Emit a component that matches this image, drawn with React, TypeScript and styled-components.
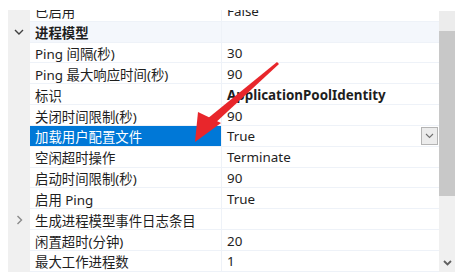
import styled, { createGlobalStyle } from 'styled-components';

const GlobalStyle = createGlobalStyle`
  html, body {
    margin: 0;
    padding: 0;
    background: #ffffff;
  }
`;

const ROW_H = 20.83;

const Frame = styled.div`
  width: 455px;
  height: 272px;
  overflow: hidden;
  background: #ffffff;
  padding-top: 10px;
  padding-left: 8px;
  box-sizing: border-box;
  display: flex;
  font-family: "Noto Sans", "Noto Sans CJK SC", sans-serif;
  font-size: 13.4px;
  color: #1e1e1e;
`;

const Grid = styled.div`
  position: relative;
  flex: 1;
  overflow: hidden;
`;

const Rows = styled.div`
  margin-top: -9px;
  display: flex;
  flex-direction: column;
`;

const Row = styled.div<{ $category?: boolean }>`
  display: grid;
  grid-template-columns: 22px 192px 1fr;
  height: ${ROW_H}px;
  background: ${(p) => (p.$category ? '#f4f7fc' : '#ffffff')};
`;

const Gutter = styled.div`
  background: #f0f0f0;
  display: flex;
  align-items: center;
  justify-content: center;
`;

const Cell = styled.div<{ $selected?: boolean; $bold?: boolean }>`
  display: flex;
  align-items: center;
  padding-left: 5px;
  padding-top: 1px;
  box-sizing: border-box;
  white-space: nowrap;
  overflow: hidden;
  border-bottom: 1px solid #eef2f8;
  font-weight: ${(p) => (p.$bold ? 700 : 400)};
  background: ${(p) => (p.$selected ? '#0078d7' : 'transparent')};
  color: ${(p) => (p.$selected ? '#ffffff' : 'inherit')};
`;

const NameCell = styled(Cell)`
  border-right: 1px solid #eef2f8;
`;

const ValueCell = styled(Cell)`
  justify-content: space-between;
  padding-right: 1px;
`;

const DropButton = styled.div`
  width: 17px;
  height: 18px;
  box-sizing: border-box;
  border: 1px solid #b4b4b4;
  background: #ececec;
  display: flex;
  align-items: center;
  justify-content: center;
`;

const Scrollbar = styled.div`
  width: 16px;
  margin-top: 1px;
  background: #f0f0f0;
  display: flex;
  flex-direction: column;
`;

const ScrollTop = styled.div`
  height: 20px;
  background: #ececec;
`;

const Thumb = styled.div`
  height: 165px;
  background: #c8c8c8;
`;

const Track = styled.div`
  flex: 1;
  display: flex;
  align-items: flex-end;
  justify-content: center;
  padding-bottom: 6px;
`;

const Arrow = styled.svg`
  position: absolute;
  left: 170px;
  top: 36px;
  pointer-events: none;
`;

type Item = {
  name: string;
  value?: string;
  category?: boolean;
  selected?: boolean;
  bold?: boolean;
  expander?: 'open' | 'closed';
  dropdown?: boolean;
};

const items: Item[] = [
  { name: '已启用', value: 'False' },
  { name: '进程模型', category: true, expander: 'open' },
  { name: 'Ping 间隔(秒)', value: '30' },
  { name: 'Ping 最大响应时间(秒)', value: '90' },
  { name: '标识', value: 'ApplicationPoolIdentity', bold: true },
  { name: '关闭时间限制(秒)', value: '90' },
  { name: '加载用户配置文件', value: 'True', selected: true, dropdown: true },
  { name: '空闲超时操作', value: 'Terminate' },
  { name: '启动时间限制(秒)', value: '90' },
  { name: '启用 Ping', value: 'True' },
  { name: '生成进程模型事件日志条目', expander: 'closed' },
  { name: '闲置超时(分钟)', value: '20' },
  { name: '最大工作进程数', value: '1' },
];

function Expander({ kind }: { kind: 'open' | 'closed' }) {
  if (kind === 'open') {
    return (
      <svg width="10" height="7" viewBox="0 0 10 7">
        <polyline points="1,1 5,5 9,1" fill="none" stroke="#404040" strokeWidth="1.4" />
      </svg>
    );
  }
  return (
    <svg width="7" height="10" viewBox="0 0 7 10">
      <polyline points="1.5,1 5.5,5 1.5,9" fill="none" stroke="#8a8a8a" strokeWidth="1.4" />
    </svg>
  );
}

export default function App() {
  return (
    <>
      <GlobalStyle />
      <Frame>
        <Grid>
          <Rows>
            {items.map((it) => (
              <Row key={it.name} $category={it.category}>
                <Gutter>{it.expander && <Expander kind={it.expander} />}</Gutter>
                <NameCell $selected={it.selected} $bold={it.category}>
                  {it.name}
                </NameCell>
                <ValueCell $bold={it.bold}>
                  <span>{it.value}</span>
                  {it.dropdown && (
                    <DropButton>
                      <svg width="9" height="6" viewBox="0 0 9 6">
                        <polyline points="1,1 4.5,4.5 8,1" fill="none" stroke="#707070" strokeWidth="1.1" />
                      </svg>
                    </DropButton>
                  )}
                </ValueCell>
              </Row>
            ))}
          </Rows>
          <Arrow width="110" height="100" viewBox="0 0 110 100">
            <polygon points="99,16 101,18 35,79 29,73" fill="#e8262b" />
            <polygon points="17,96 20,66 43,77" fill="#e8262b" />
          </Arrow>
        </Grid>
        <Scrollbar>
          <ScrollTop />
          <Thumb />
          <Track>
            <svg width="9" height="6" viewBox="0 0 9 6">
              <polyline points="1,1 4.5,4.5 8,1" fill="none" stroke="#606060" strokeWidth="1.8" />
            </svg>
          </Track>
        </Scrollbar>
      </Frame>
    </>
  );
}
